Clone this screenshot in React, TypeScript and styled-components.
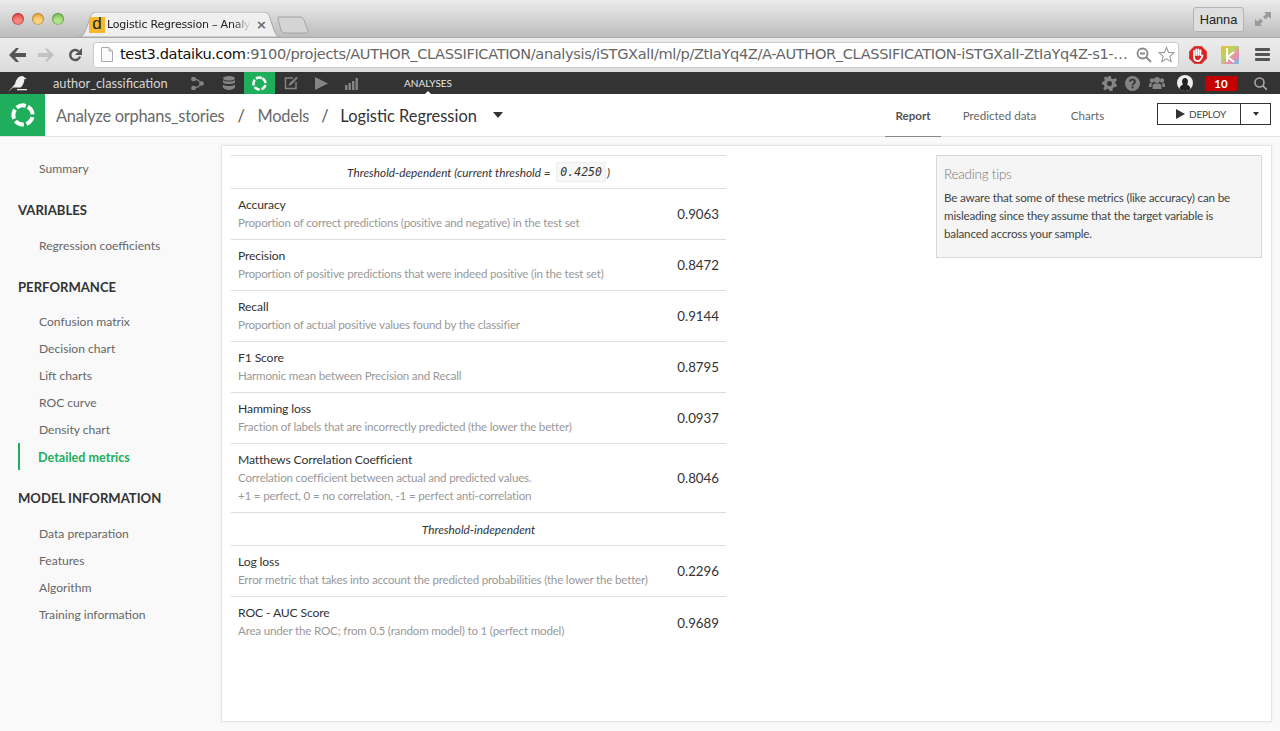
import React from "react";
import styled, { createGlobalStyle } from "styled-components";

const Global = createGlobalStyle`
  html, body { margin: 0; padding: 0; height: 100%; background: #f9f9f9; }
  body { font-family: "Lato", "Open Sans", sans-serif; overflow: hidden; }
  * { box-sizing: border-box; }
`;

const Page = styled.div`
  width: 1280px; height: 731px; display: flex; flex-direction: column; overflow: hidden; background: #f9f9f9;
`;
const TabStrip = styled.div`
  height: 37px; display: flex; background: linear-gradient(#ececec, #bcbcbc); padding-left: 12px; flex: none;
`;
const Lights = styled.div`
  display: flex; gap: 8px; padding-top: 13px; width: 66px; flex: none;
`;
const Light = styled.span<{ $c: string; $d: string }>`
  width: 12px; height: 12px; border-radius: 50%; background: radial-gradient(circle at 50% 75%, ${p => p.$c} 30%, ${p => p.$d} 90%);
  box-shadow: inset 0 0 0 1px #0003;
`;
const Tab = styled.div`
  position: relative; width: 202px; height: 25px; margin-top: 12px; flex: none; display: flex; align-items: center; padding-left: 11px;
`;
const TabShape = styled.svg`
  position: absolute; left: 0; top: 0;
`;
const Favicon = styled.span`
  position: relative; width: 16px; height: 16px; background: #f5b82e; color: #222; font: 17px/14px "Liberation Sans", sans-serif; text-align: center; flex: none;
`;
const TabTitle = styled.span`
  position: relative; margin-left: 2px; width: 144px; white-space: nowrap; font: 11px "DejaVu Sans", sans-serif; letter-spacing: -0.2px; color: #222;
  -webkit-mask-image: linear-gradient(90deg, #000 88%, #0000);
`;
const TabClose = styled.span`
  position: relative; margin-left: 5px; font: bold 13px "DejaVu Sans", sans-serif; color: #666;
`;
const NewTab = styled.svg`
  margin-left: -3px; margin-top: 16px; flex: none;
`;
const Strip = styled.div`flex: 1;`;
const UserChip = styled.div`
  width: 51px; height: 25px; margin-top: 7px; border: 1px solid #b4b4b4; border-radius: 3px; background: #dedede; font: 12.8px "Liberation Sans", sans-serif;
  display: flex; align-items: center; justify-content: center; color: #222; flex: none;
`;
const Expand = styled.svg`
  margin: 11px 9px 0 11px; flex: none;
`;
const Toolbar = styled.div`
  height: 35px; flex: none; display: flex; align-items: center; background: linear-gradient(#ededed, #dcdcdc); border-top: 1px solid #aaa; padding: 0 0 1px 9px;
`;
const NavIcon = styled.svg<{ $gap?: number }>`
  flex: none; margin-right: ${p => p.$gap ?? 0}px;
`;
const Address = styled.div`
  width: 1086px; height: 26px; background: #fff; border: 1px solid #ccc; border-radius: 3px; display: flex; align-items: center; padding-left: 7px; flex: none; margin: 0 10px 0 0;
`;
const UrlText = styled.span`
  margin: 0 0 2px 7px; width: 1016px; font: 14.6px "DejaVu Sans", sans-serif; letter-spacing: -0.37px; color: #666; white-space: nowrap;
  b { font-weight: 400; color: #111; }
`;
const DarkNav = styled.div`
  height: 22px; flex: none; background: #333; color: #ddd; display: flex; align-items: center;
`;
const Bird = styled.svg`margin-left: 8px; margin-right: 26px; flex: none;`;
const ProjectName = styled.span`
  font-size: 12.8px; width: 129px; color: #d8d8d8; flex: none;
`;
const NavCell = styled.div<{ $active?: boolean; $w: number }>`
  width: ${p => p.$w}px; height: 22px; display: flex; align-items: center; justify-content: center; flex: none;
  background: ${p => (p.$active ? "#1fae5b" : "transparent")};
`;
const NavLabel = styled.div`
  position: relative; margin-left: 37px; font-size: 10px; color: #e8e8e8; width: 46px; text-align: center; flex: none; line-height: 22px; white-space: nowrap;
  &::after { content: ""; position: absolute; left: 21px; bottom: 0; border: 3px solid transparent; border-bottom-color: #fff; border-top: 0; }
`;
const RightIcons = styled.div`
  margin-left: auto; display: flex; align-items: center; padding-right: 13px;
`;
const Badge = styled.span`
  width: 32px; height: 15px; margin: 0 17px 0 12px; background: #c50000; color: #fff; font-size: 11.5px; font-weight: 700; text-align: center; line-height: 15px;
`;
const Header = styled.div`
  height: 43px; flex: none; background: #fff; border-bottom: 1px solid #e3e3e3; display: flex; align-items: center;
`;
const LogoBlock = styled.div`
  width: 45px; height: 42px; background: #1fae5b; display: flex; align-items: center; justify-content: center; flex: none;
`;
const Crumbs = styled.div`
  display: flex; align-items: center; margin-left: 11px; font-size: 16.4px; letter-spacing: -0.25px; color: #6a6a6a; flex: none; white-space: nowrap;
`;
const Sep = styled.span<{ $m: number }>`margin: 0 ${p => p.$m}px; color: #555;`;
const Current = styled.span`color: #333; letter-spacing: 0;`;
const Caret = styled.span`
  margin-left: 16px; border: 5.5px solid transparent; border-top: 6px solid #333; border-bottom: 0;
`;
const Tabs = styled.div`
  margin-left: auto; display: flex; align-self: stretch; flex: none;
`;
const PageTab = styled.div<{ $on?: boolean; $w: number }>`
  width: ${p => p.$w}px; display: flex; align-items: center; justify-content: center; font-size: 11.6px; height: 43px; white-space: nowrap; flex: none;
  color: ${p => (p.$on ? "#555" : "#666")}; font-weight: ${p => (p.$on ? 700 : 400)};
  border-bottom: 1px solid ${p => (p.$on ? "#888" : "transparent")};
`;
const TabGap = styled.div<{ $w: number }>`width: ${p => p.$w}px; flex: none;`;
const Deploy = styled.div`
  display: flex; margin: -3px 9px 0 53px; height: 22px; border: 1px solid #333; align-self: center; color: #444; font-size: 10px; letter-spacing: -0.15px;
`;
const DeployMain = styled.div`
  width: 83px; display: flex; align-items: center; justify-content: center; gap: 4px; padding-left: 3px; border-right: 1px solid #333;
`;
const DeployCaret = styled.div`
  width: 29px; display: flex; align-items: center; justify-content: center;
  &::after { content: ""; border: 3.5px solid transparent; border-top: 4px solid #333; border-bottom: 0; }
`;
const Body = styled.div`
  flex: 1; display: flex; min-height: 0;
`;
const Side = styled.nav`
  width: 221px; flex: none; padding: 18px 0 0 18px; display: flex; flex-direction: column;
`;
const SideItem = styled.div<{ $on?: boolean }>`
  height: 27px; line-height: ${p => (p.$on ? 29 : 27)}px; font-size: ${p => (p.$on ? 12.6 : 12.1)}px; padding-left: ${p => (p.$on ? 18 : 21)}px;
  color: ${p => (p.$on ? "#1fae5b" : "#666")}; font-weight: ${p => (p.$on ? 700 : 400)};
  border-left: ${p => (p.$on ? "2px solid #1fae5b" : "none")};
`;
const SideHead = styled.div`
  font-size: 13.1px; font-weight: 700; color: #333; height: 20px; line-height: 20px; margin: 18px 0 11.5px;
`;
const Panel = styled.main`
  width: 1051px; height: 577px; margin-top: 8px; background: #fff; border: 1px solid #e4e4e4; box-shadow: 0 0 3px #0000000f; padding: 9px 9px 0 9px; display: flex; flex: none;
`;
const Metrics = styled.div`
  width: 495px; flex: none; border-top: 1px solid #ddd;
`;
const SectionRow = styled.div`
  height: 33px; display: flex; align-items: center; justify-content: center; font-style: italic; font-size: 11.8px; color: #333; border-bottom: 1px solid #ddd; white-space: pre;
`;
const Code = styled.code`
  font: italic 11.5px "DejaVu Sans Mono", monospace; background: #f7f7f7; border: 1px solid #eee; border-radius: 2px; padding: 2px 3px; margin: 0 1px 0 3px; color: #333;
`;
const Row = styled.div<{ $h: number; $last?: boolean }>`
  height: ${p => p.$h}px; display: flex; align-items: center; justify-content: space-between; padding: 0 7px;
  border-bottom: ${p => (p.$last ? "none" : "1px solid #ddd")};
`;
const RowText = styled.div`
  display: flex; flex-direction: column;
`;
const RowName = styled.div`font-size: 12.2px; letter-spacing: -0.15px; color: #333; line-height: 16px; margin-bottom: 1px;`;
const RowDesc = styled.div`font-size: 11.6px; letter-spacing: -0.19px; color: #999; line-height: 18px;`;
const RowValue = styled.div`font-size: 13.3px; color: #333;`;
const Tips = styled.aside`
  width: 326px; height: 103px; margin-left: 210px; background: #f5f5f5; border: 1px solid #d8d8d8; padding: 8px 7px; flex: none;
`;
const TipsTitle = styled.div`font-size: 13.4px; letter-spacing: -0.2px; color: #777; font-weight: 300; line-height: 20px; margin-bottom: 4px;`;
const TipsText = styled.div`font-size: 11.7px; letter-spacing: -0.2px; color: #444; line-height: 18px;`;

const Ring = ({ size, stroke }: { size: number; stroke: number }) => (
  <svg width={size} height={size} viewBox="0 0 24 24">
    <circle cx="12" cy="12" r="9.6" fill="none" stroke="#fff" strokeWidth={stroke} strokeDasharray="9.4 2.66" transform="rotate(-60 12 12)" />
  </svg>
);

const rows = [
  ["Accuracy", ["Proportion of correct predictions (positive and negative) in the test set"], "0.9063", 51],
  ["Precision", ["Proportion of positive predictions that were indeed positive (in the test set)"], "0.8472", 51],
  ["Recall", ["Proportion of actual positive values found by the classifier"], "0.9144", 51],
  ["F1 Score", ["Harmonic mean between Precision and Recall"], "0.8795", 51],
  ["Hamming loss", ["Fraction of labels that are incorrectly predicted (the lower the better)"], "0.0937", 51],
  ["Matthews Correlation Coefficient", ["Correlation coefficient between actual and predicted values.", "+1 = perfect, 0 = no correlation, -1 = perfect anti-correlation"], "0.8046", 69],
] as const;
const rows2 = [
  ["Log loss", ["Error metric that takes into account the predicted probabilities (the lower the better)"], "0.2296", 51],
  ["ROC - AUC Score", ["Area under the ROC; from 0.5 (random model) to 1 (perfect model)"], "0.9689", 51],
] as const;

const MetricRow = ({ r, last }: { r: readonly [string, readonly string[], string, number]; last?: boolean }) => (
  <Row $h={r[3]} $last={last}>
    <RowText>
      <RowName>{r[0]}</RowName>
      <div>{r[1].map(d => <RowDesc key={d}>{d}</RowDesc>)}</div>
    </RowText>
    <RowValue>{r[2]}</RowValue>
  </Row>
);

const C = "#848484";

export default function App() {
  return (
    <Page>
      <Global />
      <TabStrip>
        <Lights>
          <Light $c="#f8817a" $d="#d6322c" />
          <Light $c="#fbd27a" $d="#e0932a" />
          <Light $c="#b2e28a" $d="#5eb23c" />
        </Lights>
        <Tab>
          <TabShape width="202" height="25" viewBox="0 0 202 25">
            <path d="M0 25C5 25 6 22 8 17L12 6C13 2 15 0 19 0H185C189 0 191 2 192 6L196 18C198 23 199 25 202 25Z" fill="#efefef" stroke="#a8a8a8" />
          </TabShape>
          <Favicon>d</Favicon>
          <TabTitle>Logistic Regression – Analy</TabTitle>
          <TabClose>×</TabClose>
        </Tab>
        <NewTab width="32" height="18" viewBox="0 0 32 18">
          <path d="M1 1H22C25 1 26 2 27 4L31 15C31 17 30 17 28 17H8C6 17 5 16 4 14L1 3Z" fill="#d4d4d4" stroke="#a4a4a4" />
        </NewTab>
        <Strip />
        <UserChip>Hanna</UserChip>
        <Expand width="16" height="16" viewBox="0 0 16 16" fill="#9a9a9a">
          <path d="M9 1H16V8L13.5 5.5L10.5 8.5L8 6L11 3Z" />
          <path d="M0 8L2.5 10.5L5.5 7.5L8 10L5 13L7 15H0Z" />
        </Expand>
      </TabStrip>
      <Toolbar>
        <NavIcon $gap={12} width="17" height="14" viewBox="0 0 17 14" fill="#555"><path d="M0 7L7 0H10L6 5H17V9H6L10 14H7Z" /></NavIcon>
        <NavIcon $gap={14} width="16" height="14" viewBox="0 0 17 14" fill="#c2c2c2"><path d="M17 7L10 0H7L11 5H0V9H11L7 14H10Z" /></NavIcon>
        <NavIcon $gap={11} width="14" height="14" viewBox="0 0 14 14" fill="none">
          <path d="M12 8.5A5 5 0 1 1 10.5 3.2" stroke="#555" strokeWidth="2.4" />
          <path d="M14 0V7H7Z" fill="#555" />
        </NavIcon>
        <Address>
          <svg width="12" height="15" viewBox="0 0 12 15" fill="#fafafa" stroke="#aaa"><path d="M.5.5H8L11.5 4V14.500H.5ZM8 .5V4H11.500" /></svg>
          <UrlText><b>test3.dataiku.com</b>:9100/projects/AUTHOR_CLASSIFICATION/analysis/iSTGXalI/ml/p/ZtIaYq4Z/A-AUTHOR_CLASSIFICATION-iSTGXalI-ZtIaYq4Z-s1-…</UrlText>
          <svg width="16" height="16" viewBox="0 0 16 16" fill="none" stroke="#888" strokeWidth="1.800" style={{ flex: "none" }}><circle cx="6.500" cy="6.500" r="5" /><path d="M10 10L15 15M4 6.500H9" /></svg>
          <svg style={{ marginLeft: 6, flex: "none" }} width="17" height="17" viewBox="0 0 24 24" fill="#fff" stroke="#999" strokeWidth="1.500"><path d="M12 2l3 7 7.500.6-5.700 5 1.800 7.400L12 18l-6.600 4 1.800-7.400-5.700-5L9 9z" /></svg>
        </Address>
        <svg width="18" height="18" viewBox="0 0 18 18" style={{ flex: "none", marginRight: 14 }}>
          <path d="M5.500 0H12.500L18 5.500V12.500L12.500 18H5.500L0 12.500V5.500Z" fill="#d22" stroke="#b99" strokeWidth=".6" />
          <path d="M5 9V5M7.200 9V3.500M9.400 9V3.500M11.500 9V4.500M5 8V11C5 14 7 15 9 15C11 15 12.500 13 13.500 9.500" fill="none" stroke="#fff" strokeWidth="1.800" strokeLinecap="round" />
        </svg>
        <svg width="18" height="18" viewBox="0 0 18 18" style={{ flex: "none", marginRight: 16 }}>
          <defs><linearGradient id="kg" x1="0" y1="0" x2="1" y2="1"><stop offset="0" stopColor="#f6b53a" /><stop offset=".4" stopColor="#b5d560" /><stop offset=".7" stopColor="#f08bb0" /><stop offset="1" stopColor="#62c6e8" /></linearGradient></defs>
          <rect width="18" height="18" rx="1" fill="url(#kg)" />
          <path d="M6 2V16M13 6L6.500 11L13 16" fill="none" stroke="#fff" strokeWidth="2" />
        </svg>
        <svg width="15" height="13" viewBox="0 0 15 13" fill="#555" style={{ flex: "none" }}>
          <rect width="15" height="3" rx="1" /><rect y="5" width="15" height="3" rx="1" /><rect y="10" width="15" height="3" rx="1" />
        </svg>
      </Toolbar>
      <DarkNav>
        <Bird width="19" height="17" viewBox="0 0 19 17" fill="#eee">
          <path d="M0 17L7 9C8 5 10 1 14 1C15.500 1 16 2 16.500 2.500L19 3.500L16.500 4C16 8 15 10.500 12.500 12.500H5Z" />
          <rect x="9" y="14" width="10" height="1.300" />
        </Bird>
        <ProjectName>author_classification</ProjectName>
        <NavCell $w={31}>
          <svg width="13" height="13" viewBox="0 0 13 13" fill={C} stroke={C} strokeWidth="1.300"><circle cx="2.500" cy="2" r="1.700" /><circle cx="2.500" cy="11" r="1.700" /><circle cx="10.500" cy="6.500" r="1.700" /><path d="M2.500 2L7 3L10.500 6.500L7 10L2.500 11" fill="none" /></svg>
        </NavCell>
        <NavCell $w={31}>
          <svg width="12" height="14" viewBox="0 0 12 14" fill={C}><ellipse cx="6" cy="2.300" rx="6" ry="2.300" /><path d="M0 4C2 6 10 6 12 4V6.500C10 8.500 2 8.500 0 6.500ZM0 8.500C2 10.500 10 10.500 12 8.500V11.500C10 14.700 2 14.700 0 11.500Z" /></svg>
        </NavCell>
        <NavCell $w={31} $active><Ring size={15} stroke={4} /></NavCell>
        <NavCell $w={31}>
          <svg width="14" height="14" viewBox="0 0 14 14" fill="none" stroke={C} strokeWidth="1.500"><path d="M9 2H1.500V12.500H12V6" /><path d="M5 9.500L6 7L12.500 1L13.500 2L7.500 8.500Z" fill={C} strokeWidth=".6" /></svg>
        </NavCell>
        <NavCell $w={30}>
          <svg width="13" height="13" viewBox="0 0 13 13" fill={C}><path d="M0 0L13 6.500L0 13Z" /></svg>
        </NavCell>
        <NavCell $w={31}>
          <svg width="13" height="13" viewBox="0 0 13 13" fill={C}><rect y="8" width="2.400" height="5" /><rect x="3.500" y="6" width="2.400" height="7" /><rect x="7" y="4" width="2.400" height="9" /><rect x="10.500" y="1" width="2.400" height="12" /></svg>
        </NavCell>
        <NavLabel>ANALYSES</NavLabel>
        <RightIcons>
          <svg width="15" height="15" viewBox="0 0 24 24" fill={C}><path d="M10 0H14L15 4L18 5.300L21.500 3.200L24 6.500L21 9.500L21.500 12L24 14L22.500 18L19 17.500L17 20L17 24H12.500L11 21L8 20.500L5 23L2 20L4 17L3 14L0 13.500V9.500L3.500 8.500L4.500 6L3 3L6 .5L9 3ZM12 8A4 4 0 1 0 12 16A4 4 0 1 0 12 8Z" fillRule="evenodd" /></svg>
          <svg style={{ marginLeft: 8 }} width="15" height="15" viewBox="0 0 15 15"><circle cx="7.500" cy="7.500" r="7.500" fill={C} /><path d="M5 5.800C5 2.800 10 2.800 10 5.800C10 7.500 7.500 7.300 7.500 9.200" fill="none" stroke="#333" strokeWidth="1.800" /><rect x="6.500" y="10.300" width="2" height="2" fill="#333" /></svg>
          <svg style={{ marginLeft: 9 }} width="16" height="14" viewBox="0 0 16 14" fill={C}><circle cx="8" cy="4" r="3" /><circle cx="3" cy="4.500" r="2.200" /><circle cx="13" cy="4.500" r="2.200" /><path d="M3.500 13V10C3.500 8 5 7.500 8 7.500C11 7.500 12.500 8 12.500 10V13ZM0 11V8.500C0 7.500 1 7 2.800 7L2.500 11ZM16 11V8.500C16 7.500 15 7 13.200 7L13.500 11Z" /></svg>
          <svg style={{ marginLeft: 12 }} width="16" height="16" viewBox="0 0 16 16"><circle cx="8" cy="8" r="8" fill="#eee" /><path d="M2.500 14C3 10.500 5 10 6 9.500C4.500 8 4.500 3 8 3C11.500 3 11.500 8 10 9.500C11 10 13 10.500 13.500 14C11 16.500 5 16.500 2.500 14Z" fill="#222" /></svg>
          <Badge>10</Badge>
          <svg width="13" height="13" viewBox="0 0 13 13" fill="none" stroke="#aaa" strokeWidth="1.600"><circle cx="5.500" cy="5.500" r="4.500" /><path d="M9 9L13 13" /></svg>
        </RightIcons>
      </DarkNav>
      <Header>
        <LogoBlock><Ring size={24} stroke={4} /></LogoBlock>
        <Crumbs>
          Analyze orphans_stories<Sep $m={13}>/</Sep>Models<Sep $m={12}>/</Sep><Current>Logistic Regression</Current>
          <Caret />
        </Crumbs>
        <Tabs>
          <PageTab $on $w={56}>Report</PageTab>
          <TabGap $w={21} />
          <PageTab $w={75}>Predicted data</PageTab>
          <TabGap $w={34} />
          <PageTab $w={33}>Charts</PageTab>
          <Deploy>
            <DeployMain>
              <svg width="10" height="10" viewBox="0 0 10 10" fill="#333"><path d="M1 0L10 5L1 10Z" /></svg>
              DEPLOY
            </DeployMain>
            <DeployCaret />
          </Deploy>
        </Tabs>
      </Header>
      <Body>
        <Side>
          <SideItem>Summary</SideItem>
          <SideHead>VARIABLES</SideHead>
          <SideItem>Regression coefficients</SideItem>
          <SideHead>PERFORMANCE</SideHead>
          <SideItem>Confusion matrix</SideItem>
          <SideItem>Decision chart</SideItem>
          <SideItem>Lift charts</SideItem>
          <SideItem>ROC curve</SideItem>
          <SideItem>Density chart</SideItem>
          <SideItem $on>Detailed metrics</SideItem>
          <SideHead>MODEL INFORMATION</SideHead>
          <SideItem>Data preparation</SideItem>
          <SideItem>Features</SideItem>
          <SideItem>Algorithm</SideItem>
          <SideItem>Training information</SideItem>
        </Side>
        <Panel>
          <Metrics>
            <SectionRow>Threshold-dependent (current threshold = <Code>0.4250</Code>)</SectionRow>
            {rows.map(r => <MetricRow key={r[0]} r={r} />)}
            <SectionRow>Threshold-independent</SectionRow>
            {rows2.map((r, i) => <MetricRow key={r[0]} r={r} last={i === 1} />)}
          </Metrics>
          <Tips>
            <TipsTitle>Reading tips</TipsTitle>
            <TipsText>Be aware that some of these metrics (like accuracy) can be misleading since they assume that the target variable is balanced accross your sample.</TipsText>
          </Tips>
        </Panel>
      </Body>
    </Page>
  );
}
